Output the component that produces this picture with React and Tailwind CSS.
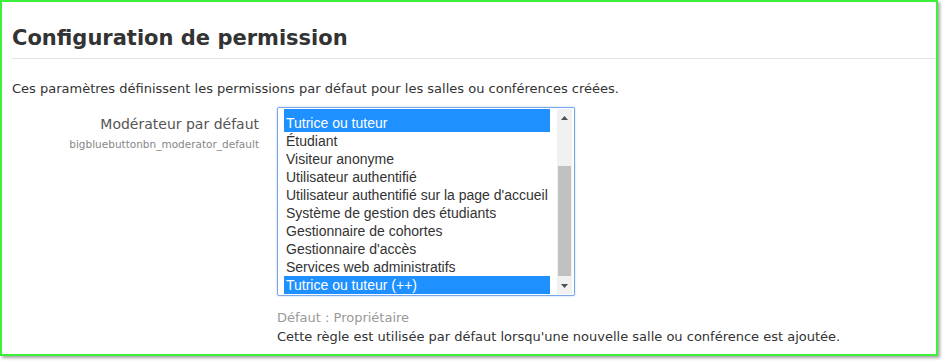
const options = [
  "Responsable",
  "Tutrice ou tuteur",
  "Étudiant",
  "Visiteur anonyme",
  "Utilisateur authentifié",
  "Utilisateur authentifié sur la page d'accueil",
  "Système de gestion des étudiants",
  "Gestionnaire de cohortes",
  "Gestionnaire d'accès",
  "Services web administratifs",
  "Tutrice ou tuteur (++)",
];

const selected = ["Tutrice ou tuteur", "Tutrice ou tuteur (++)"];

function ListBox() {
  return (
    <div className="relative w-[298px] h-[189px] border border-[#7aa7ea] rounded-[2px] bg-white overflow-hidden shadow-[0_0_2px_rgba(90,150,240,0.5)] font-['Liberation_Sans',Arial,sans-serif] text-[14px] text-[#333]">
      <div className="flex flex-col mt-[-17px] pl-[6px] pr-[24px]">
        {options.map((o, i) => (
          <div
            key={i}
            className={
              "leading-[18px] pl-[2px] whitespace-nowrap " +
              (i === 1 ? "h-[23px] pt-[5px] " : "h-[18px] ") +
              (selected.includes(o) ? "bg-[#1e90ff] text-white" : "")
            }
          >
            {o}
          </div>
        ))}
      </div>
      {/* scrollbar */}
      <div className="absolute right-[2px] top-[1px] bottom-[1px] w-[15px] bg-[#f1f1f1] flex flex-col items-center">
        <div className="h-[17px] flex items-center justify-center">
          <svg width="7" height="4" viewBox="0 0 7 4"><path d="M0 4L3.5 0L7 4Z" fill="#505050" /></svg>
        </div>
        <div className="mt-[40px] w-[13px] h-[110px] bg-[#c1c1c1]" />
        <div className="flex-1" />
        <div className="h-[17px] flex items-center justify-center">
          <svg width="7" height="4" viewBox="0 0 7 4"><path d="M0 0L3.5 4L7 0Z" fill="#505050" /></svg>
        </div>
      </div>
    </div>
  );
}

export default function App() {
  return (
    <div className="w-[943px] h-[361px] bg-white font-['DejaVu_Sans',Verdana,sans-serif]">
      <div className="w-[938px] h-[356px] border-2 border-[#3cf03c] shadow-[2px_2px_3px_rgba(0,0,0,0.35)] bg-white">
        <div className="pl-[10px] pt-[22px]">
          <h2 className="text-[21px] font-bold text-[#333] leading-[28px] pb-[6px] border-b border-[#e3e3e3]">
            Configuration de permission
          </h2>
          <p className="mt-[21px] text-[13px] text-[#333] leading-[18px]">
            Ces paramètres définissent les permissions par défaut pour les salles ou conférences créées.
          </p>
          <div className="flex mt-[9px]">
            <div className="w-[247px] flex flex-col items-end pt-[8px]">
              <div className="text-[14px] text-[#555] leading-[18px]">Modérateur par défaut</div>
              <div className="text-[10.5px] text-[#888] leading-[18px] mt-[2px]">bigbluebuttonbn_moderator_default</div>
            </div>
            <div className="ml-[18px] flex flex-col">
              <ListBox />
              <div className="mt-[13px] text-[13px] text-[#999] leading-[18px]">Défaut : Propriétaire</div>
              <div className="text-[13px] text-[#333] leading-[18px] mt-[1px]">
                Cette règle est utilisée par défaut lorsqu'une nouvelle salle ou conférence est ajoutée.
              </div>
            </div>
          </div>
        </div>
      </div>
    </div>
  );
}
